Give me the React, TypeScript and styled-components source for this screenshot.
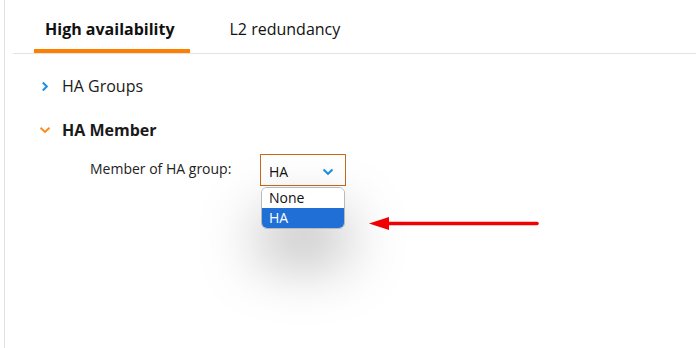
import styled, { createGlobalStyle } from "styled-components";

const Global = createGlobalStyle`
  html, body {
    margin: 0;
    padding: 0;
    background: #fff;
  }
  body {
    font-family: "Open Sans", "Liberation Sans", sans-serif;
    color: #1f1f1f;
  }
`;

const Page = styled.div`
  width: 696px;
  height: 348px;
  box-sizing: border-box;
  padding-left: 4px;
  overflow: hidden;
`;

const Frame = styled.div`
  height: 100%;
  border-left: 1px solid #e2e2e2;
  padding-left: 8px;
`;

const TabBar = styled.div`
  display: flex;
  padding-left: 21px;
  height: 54px;
  box-sizing: border-box;
  border-bottom: 1px solid #e3e3e3;
`;

const Tab = styled.div<{ $active?: boolean }>`
  display: flex;
  align-items: center;
  padding: 8px 15px 4px 11px;
  margin-right: 29px;
  font-size: 16px;
  font-weight: ${(p) => (p.$active ? 700 : 400)};
  color: #111;
  box-shadow: ${(p) => (p.$active ? "inset 0 -4px 0 #ff8000" : "none")};
`;

const Content = styled.div`
  padding: 21px 0 0 25px;
`;

const Section = styled.div`
  margin-bottom: 22px;
`;

const SectionHead = styled.div<{ $open?: boolean }>`
  display: flex;
  align-items: center;
  gap: 10px;
  height: 22px;
  font-size: 16px;
  font-weight: ${(p) => (p.$open ? 700 : 400)};
  color: #1a1a1a;
`;

const Chevron = styled.span`
  width: 14px;
  display: flex;
  justify-content: center;
`;

const FieldRow = styled.div`
  display: flex;
  align-items: flex-start;
  padding: 13px 0 0 52px;
`;

const Label = styled.div`
  font-size: 14px;
  color: #222;
  width: 170px;
  padding-top: 5px;
`;

const SelectWrap = styled.div`
  position: relative;
  width: 86px;
`;

const SelectBox = styled.div`
  box-sizing: border-box;
  height: 32px;
  border: 1px solid #c8691b;
  display: flex;
  align-items: center;
  justify-content: space-between;
  padding: 3px 11px 0 8px;
  font-size: 14px;
  color: #111;
`;

const Menu = styled.div`
  position: absolute;
  top: 33px;
  left: 1px;
  width: 84px;
  box-sizing: border-box;
  border: 1px solid #b9b9b9;
  border-radius: 6px;
  background: #fff;
  overflow: hidden;
  box-shadow: 0 30px 60px rgba(0, 0, 0, 0.34);
`;

const Option = styled.div<{ $selected?: boolean }>`
  height: 20px;
  line-height: 20px;
  padding-left: 7px;
  font-size: 14px;
  color: ${(p) => (p.$selected ? "#fff" : "#111")};
  background: ${(p) => (p.$selected ? "#1f6fd6" : "#fff")};
`;

const Arrow = styled.svg`
  position: absolute;
  left: 367px;
  top: 216px;
`;

export default function App() {
  return (
    <>
      <Global />
      <Page>
        <Frame>
          <TabBar>
            <Tab $active>High availability</Tab>
            <Tab>L2 redundancy</Tab>
          </TabBar>
          <Content>
            <Section>
              <SectionHead>
                <Chevron>
                  <svg width="8" height="11" viewBox="0 0 8 11">
                    <path d="M1.8 1.5 L5.8 5.5 L1.8 9.5" fill="none" stroke="#1d8fe0" strokeWidth="2" />
                  </svg>
                </Chevron>
                HA Groups
              </SectionHead>
            </Section>
            <Section>
              <SectionHead $open>
                <Chevron>
                  <svg width="12" height="8" viewBox="0 0 12 8">
                    <path d="M1.5 1.8 L6 6 L10.5 1.8" fill="none" stroke="#ff8a1e" strokeWidth="2" />
                  </svg>
                </Chevron>
                HA Member
              </SectionHead>
              <FieldRow>
                <Label>Member of HA group:</Label>
                <SelectWrap>
                  <SelectBox>
                    <span>HA</span>
                    <svg width="12" height="8" viewBox="0 0 12 8">
                      <path d="M1.5 1.5 L6 5.8 L10.5 1.5" fill="none" stroke="#1d8fe0" strokeWidth="2" />
                    </svg>
                  </SelectBox>
                  <Menu>
                    <Option>None</Option>
                    <Option $selected>HA</Option>
                  </Menu>
                </SelectWrap>
              </FieldRow>
            </Section>
          </Content>
        </Frame>
        <Arrow width="175" height="16" viewBox="0 0 175 16">
          <line x1="18" y1="7.5" x2="170" y2="7.5" stroke="#f00000" strokeWidth="3.5" strokeLinecap="round" />
          <polygon points="2,7.5 22,1 22,14" fill="#f00000" />
        </Arrow>
      </Page>
    </>
  );
}
